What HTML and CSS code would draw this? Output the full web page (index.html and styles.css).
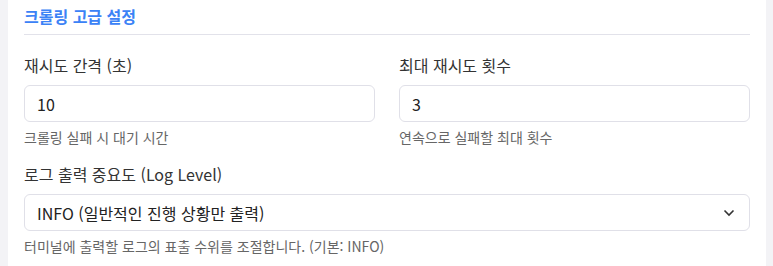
FILE: index.html
```html
<!doctype html>
<html lang="ko">
<head>
    <meta charset="UTF-8">
    <title>크롤링 고급 설정</title>
    <link rel="stylesheet" href="styles.css">
</head>
<body>
<div class="panel">
    <h3 class="panel__title">크롤링 고급 설정</h3>

    <div class="panel__row">
        <div class="field">
            <label class="field__label">재시도 간격 (초)</label>
            <input class="field__input" type="number" value="10">
            <div class="field__hint">크롤링 실패 시 대기 시간</div>
        </div>
        <div class="field">
            <label class="field__label">최대 재시도 횟수</label>
            <input class="field__input" type="number" value="3">
            <div class="field__hint">연속으로 실패할 최대 횟수</div>
        </div>
    </div>

    <div class="field">
        <label class="field__label">로그 출력 중요도 (Log Level)</label>
        <div class="field__select">
            <span>INFO (일반적인 진행 상황만 출력)</span>
            <svg width="12" height="8" viewBox="0 0 12 8">
                <path d="M1.5 1.5 L6 6 L10.5 1.5" fill="none" stroke="#333" stroke-width="1.6"/>
            </svg>
        </div>
        <div class="field__hint">터미널에 출력할 로그의 표출 수위를 조절합니다. (기본: INFO)</div>
    </div>
</div>
</body>
</html>
```

FILE: styles.css
```css
html, body {
    margin: 0;
    height: 100%;
}

body {
    background-color: #f3f3f6;
    font-family: "Noto Sans CJK KR", "Noto Sans", sans-serif;
    color: #333333;
}

.panel {
    background-color: #ffffff;
    margin: 0 7px 0 8px;
    padding: 0 16px;
    height: 100%;
    box-sizing: border-box;
}

.panel__title {
    margin: 0;
    padding: 6px 0 8px;
    font-size: 16px;
    font-weight: 700;
    line-height: 20px;
    color: #3b82f6;
    border-bottom: 1px solid #e2e2ea;
}

.panel__row {
    display: grid;
    grid-template-columns: 1fr 1fr;
    gap: 24px;
    margin-top: 18px;
}

.field {
    display: flex;
    flex-direction: column;
}

.panel__row + .field {
    margin-top: 15px;
}

.field__label {
    font-size: 16px;
    line-height: 24px;
    margin-bottom: 8px;
}

.field__input,
.field__select {
    box-sizing: border-box;
    height: 37px;
    border: 1px solid #e0e0e8;
    border-radius: 6px;
    padding: 0 12px;
    font-family: inherit;
    font-size: 16px;
    color: #222222;
    background-color: #ffffff;
    outline: none;
}

.field__input::-webkit-inner-spin-button {
    -webkit-appearance: none;
}

.field__select {
    display: flex;
    align-items: center;
    justify-content: space-between;
    padding-right: 14px;
}

.field__hint {
    font-size: 14px;
    line-height: 20px;
    margin-top: 5px;
    color: #666666;
}
```
